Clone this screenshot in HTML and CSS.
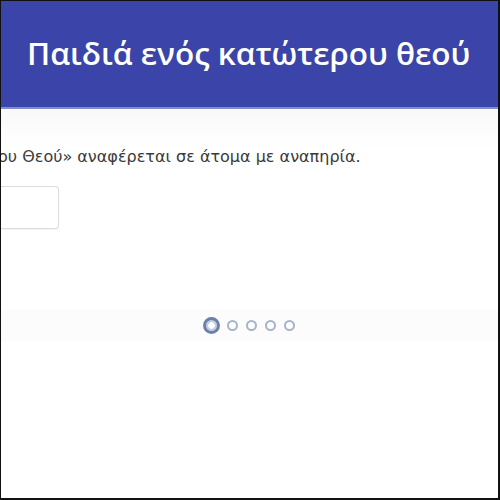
FILE: index.html
```html
<!DOCTYPE html>
<html lang="el">
<head>
<meta charset="utf-8">
<link rel="stylesheet" href="styles.css">
</head>
<body>
<div class="frame">
  <header class="header">
    <h1 class="title">Παιδιά ενός κατώτερου θεού</h1>
  </header>
  <main class="content">
    <p class="text"><span class="clip">ου Θεού» αναφέρεται σε άτομα με αναπηρία.</span></p>
    <div class="box"></div>
    <div class="dots-band">
      <span class="dot active"></span>
      <span class="dot"></span>
      <span class="dot"></span>
      <span class="dot"></span>
      <span class="dot"></span>
    </div>
  </main>
</div>
</body>
</html>
```
FILE: styles.css
```css
html, body {
  margin: 0;
  padding: 0;
  background: #fff;
}
.frame {
  width: 500px;
  height: 500px;
  box-sizing: border-box;
  border-style: solid;
  border-color: #111;
  border-width: 1px 2px 2px 1px;
  overflow: hidden;
  display: flex;
  flex-direction: column;
}
.header {
  height: 106px;
  background: #3b44a8;
  border-bottom: 2px solid #858bcc;
  display: flex;
  align-items: center;
  padding-left: 26px;
  flex-shrink: 0;
}
.title {
  margin: 0;
  margin-top: -4px;
  color: #fff;
  font-family: "Open Sans", sans-serif;
  font-weight: 600;
  font-size: 31.5px;
  white-space: nowrap;
}
.content {
  flex: 1;
  display: flex;
  flex-direction: column;
  background: linear-gradient(#f9f9f9, #fff 40px);
}
.text {
  margin: 38px 0 0 0;
  font-family: "DejaVu Sans", sans-serif;
  font-size: 16px;
  color: #3a3a3a;
  white-space: nowrap;
  height: 20px;
  line-height: 20px;
}
.clip {
  display: inline-block;
  margin-left: -3px;
}
.box {
  margin-top: 19px;
  width: 58px;
  height: 43px;
  box-sizing: border-box;
  border: 1px solid #dcdcdc;
  border-left: none;
  border-radius: 0 4px 4px 0;
  box-shadow: 0 1px 1px rgba(0,0,0,0.05);
}
.dots-band {
  margin-top: 81px;
  height: 31px;
  background: #fcfcfc;
  display: flex;
  align-items: center;
  padding-left: 202px;
  gap: 8px;
}
.dot {
  width: 11px;
  height: 11px;
  box-sizing: border-box;
  border: 2px solid #a7b3c9;
  border-radius: 50%;
  background: #fff;
}
.dot.active {
  width: 17px;
  height: 17px;
  border: 3px solid #6c80a8;
  background: radial-gradient(circle, #ffffff 0 3px, #c3cfe4 3.5px 100%);
  margin-right: -1px;
}
```
